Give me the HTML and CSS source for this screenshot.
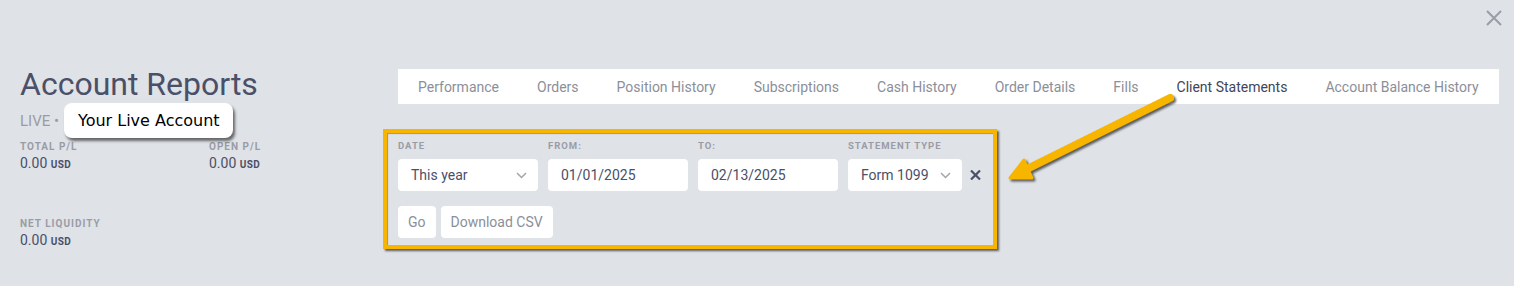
FILE: index.html
```
<!DOCTYPE html>
<html lang="en">
<head>
    <meta charset="UTF-8">
    <title>Account Reports</title>
    <link rel="stylesheet" href="styles.css">
</head>
<body>
    <div class="page">
        <div class="topbar">
            <button class="close" aria-label="Close">
                <svg width="16" height="16" viewBox="0 0 16 16"><path d="M1 1 L15 15 M15 1 L1 15" stroke="#9a9da6" stroke-width="2" fill="none"/></svg>
            </button>
        </div>

        <div class="layout">
            <aside class="sidebar">
                <h1>Account Reports</h1>
                <div class="account-line">
                    <span class="live">LIVE •</span>
                    <span class="callout">Your Live Account</span>
                </div>
                <div class="stats">
                    <div class="stat">
                        <div class="stat-label">Total P/L</div>
                        <div class="stat-value">0.00 <span class="ccy">USD</span></div>
                    </div>
                    <div class="stat">
                        <div class="stat-label">Open P/L</div>
                        <div class="stat-value">0.00 <span class="ccy">USD</span></div>
                    </div>
                    <div class="stat">
                        <div class="stat-label">Net Liquidity</div>
                        <div class="stat-value">0.00 <span class="ccy">USD</span></div>
                    </div>
                </div>
            </aside>

            <main class="main">
                <nav class="tabs">
                    <a class="tab">Performance</a>
                    <a class="tab">Orders</a>
                    <a class="tab">Position History</a>
                    <a class="tab">Subscriptions</a>
                    <a class="tab">Cash History</a>
                    <a class="tab">Order Details</a>
                    <a class="tab">Fills</a>
                    <a class="tab active">Client Statements</a>
                    <a class="tab">Account Balance History</a>
                </nav>

                <div class="highlight">
                    <div class="filters">
                        <div class="field">
                            <label>Date</label>
                            <div class="control">
                                <span>This year</span>
                                <svg class="chevron" width="11" height="7" viewBox="0 0 11 7"><path d="M1 1 L5.5 5.5 L10 1" stroke="#a3a6ae" stroke-width="1.5" fill="none"/></svg>
                            </div>
                        </div>
                        <div class="field">
                            <label>From:</label>
                            <div class="control">01/01/2025</div>
                        </div>
                        <div class="field">
                            <label>To:</label>
                            <div class="control">02/13/2025</div>
                        </div>
                        <div class="field field-narrow">
                            <label>Statement Type</label>
                            <div class="control">
                                <span>Form 1099</span>
                                <svg class="chevron" width="11" height="7" viewBox="0 0 11 7"><path d="M1 1 L5.5 5.5 L10 1" stroke="#a3a6ae" stroke-width="1.5" fill="none"/></svg>
                            </div>
                        </div>
                        <button class="clear" aria-label="Clear">
                            <svg width="11" height="10" viewBox="0 0 11 10"><path d="M1 0.5 L10 9.5 M10 0.5 L1 9.5" stroke="#4a5068" stroke-width="2.2" fill="none"/></svg>
                        </button>
                    </div>
                    <div class="actions">
                        <button class="btn">Go</button>
                        <button class="btn">Download CSV</button>
                    </div>
                </div>
            </main>
        </div>

        <svg class="arrow" width="190" height="105" viewBox="0 0 190 105">
            <path d="M175 13 L30 85" stroke="#f7b500" stroke-width="8" stroke-linecap="round" fill="none"/>
            <polygon points="15,93 37,93 29,75" fill="#f7b500" stroke="#f7b500" stroke-width="3" stroke-linejoin="round"/>
        </svg>
    </div>
</body>
</html>
```

FILE: styles.css
```
body {
    margin: 0;
    background: #dfe2e7;
    font-family: 'Roboto', 'Liberation Sans', sans-serif;
    color: #4a5068;
}

.page {
    position: relative;
    height: 286px;
    overflow: hidden;
}

.topbar {
    height: 66px;
    display: flex;
    justify-content: flex-end;
    align-items: flex-start;
    padding: 10px 12px 0 0;
    box-sizing: border-box;
}

.close {
    background: none;
    border: none;
    padding: 0;
    width: 16px;
    height: 16px;
    cursor: pointer;
}

.close svg {
    display: block;
}

.layout {
    display: flex;
    padding: 0 15px 0 20px;
}

.sidebar {
    width: 378px;
    flex-shrink: 0;
}

h1 {
    margin: 0;
    font-size: 32px;
    line-height: 36px;
    font-weight: 400;
    color: #4a5068;
}

.account-line {
    position: relative;
    margin-top: 9px;
    height: 20px;
    line-height: 20px;
    font-size: 15px;
}

.live {
    color: #9a9ca5;
}

/* annotation bubble over the account name */
.callout {
    position: absolute;
    left: 44px;
    top: -8px;
    height: 35px;
    line-height: 35px;
    padding: 0 13px 0 14px;
    background: #fff;
    border-radius: 8px;
    box-shadow: 2px 3px 3px rgba(0, 0, 0, 0.55);
    font-family: 'DejaVu Sans', sans-serif;
    font-size: 16px;
    color: #000;
    white-space: nowrap;
}

.stats {
    display: grid;
    grid-template-columns: 189px 189px;
    row-gap: 44px;
    margin-top: 10px;
}

.stat-label {
    font-size: 10px;
    line-height: 12px;
    font-weight: 700;
    letter-spacing: 1px;
    text-transform: uppercase;
    color: #9a9ca5;
}

.stat-value {
    margin-top: 1px;
    font-size: 14px;
    line-height: 18px;
    color: #4a5068;
}

.ccy {
    font-size: 10px;
    font-weight: 700;
    letter-spacing: 0.3px;
}

.main {
    flex: 1;
    min-width: 0;
}

.tabs {
    display: flex;
    margin-top: 3px;
    height: 35px;
    background: #fff;
    padding-left: 1px;
}

.tab {
    padding: 1px 19px 0;
    line-height: 34px;
    font-size: 14px;
    color: #8b8f99;
    white-space: nowrap;
    cursor: pointer;
}

.tab.active {
    color: #3f455a;
}

/* yellow annotation frame around the filter form */
.highlight {
    width: fit-content;
    margin: 25px 0 0 -15px;
    border: 4px solid #f7b500;
    padding: 7px 12px 7px 11px;
    box-shadow: 2px 2px 2px rgba(0, 0, 0, 0.6), inset 1px 1px 1px rgba(0, 0, 0, 0.35);
}

.filters {
    display: flex;
    align-items: flex-end;
}

.field {
    width: 140px;
    margin-right: 10px;
}

.field-narrow {
    width: 114px;
    margin-right: 8px;
}

.field label {
    display: block;
    margin-bottom: 7px;
    font-size: 9.5px;
    line-height: 12px;
    font-weight: 700;
    letter-spacing: 1px;
    text-transform: uppercase;
    color: #9a9ca5;
}

.control {
    display: flex;
    align-items: center;
    justify-content: space-between;
    height: 32px;
    padding: 0 11px 0 13px;
    background: #fff;
    border-radius: 4px;
    font-size: 14px;
    color: #4a5068;
}

.chevron {
    display: block;
}

.clear {
    background: none;
    border: none;
    padding: 0;
    height: 32px;
    display: flex;
    align-items: center;
    cursor: pointer;
}

.actions {
    display: flex;
    gap: 5px;
    margin-top: 15px;
}

.btn {
    height: 32px;
    padding: 0 10px;
    background: #fff;
    border: none;
    border-radius: 4px;
    font-family: inherit;
    font-size: 14px;
    color: #8b8f99;
    cursor: pointer;
}

.arrow {
    position: absolute;
    left: 995px;
    top: 85px;
    filter: drop-shadow(2px 2px 1px rgba(0, 0, 0, 0.6));
}
```
